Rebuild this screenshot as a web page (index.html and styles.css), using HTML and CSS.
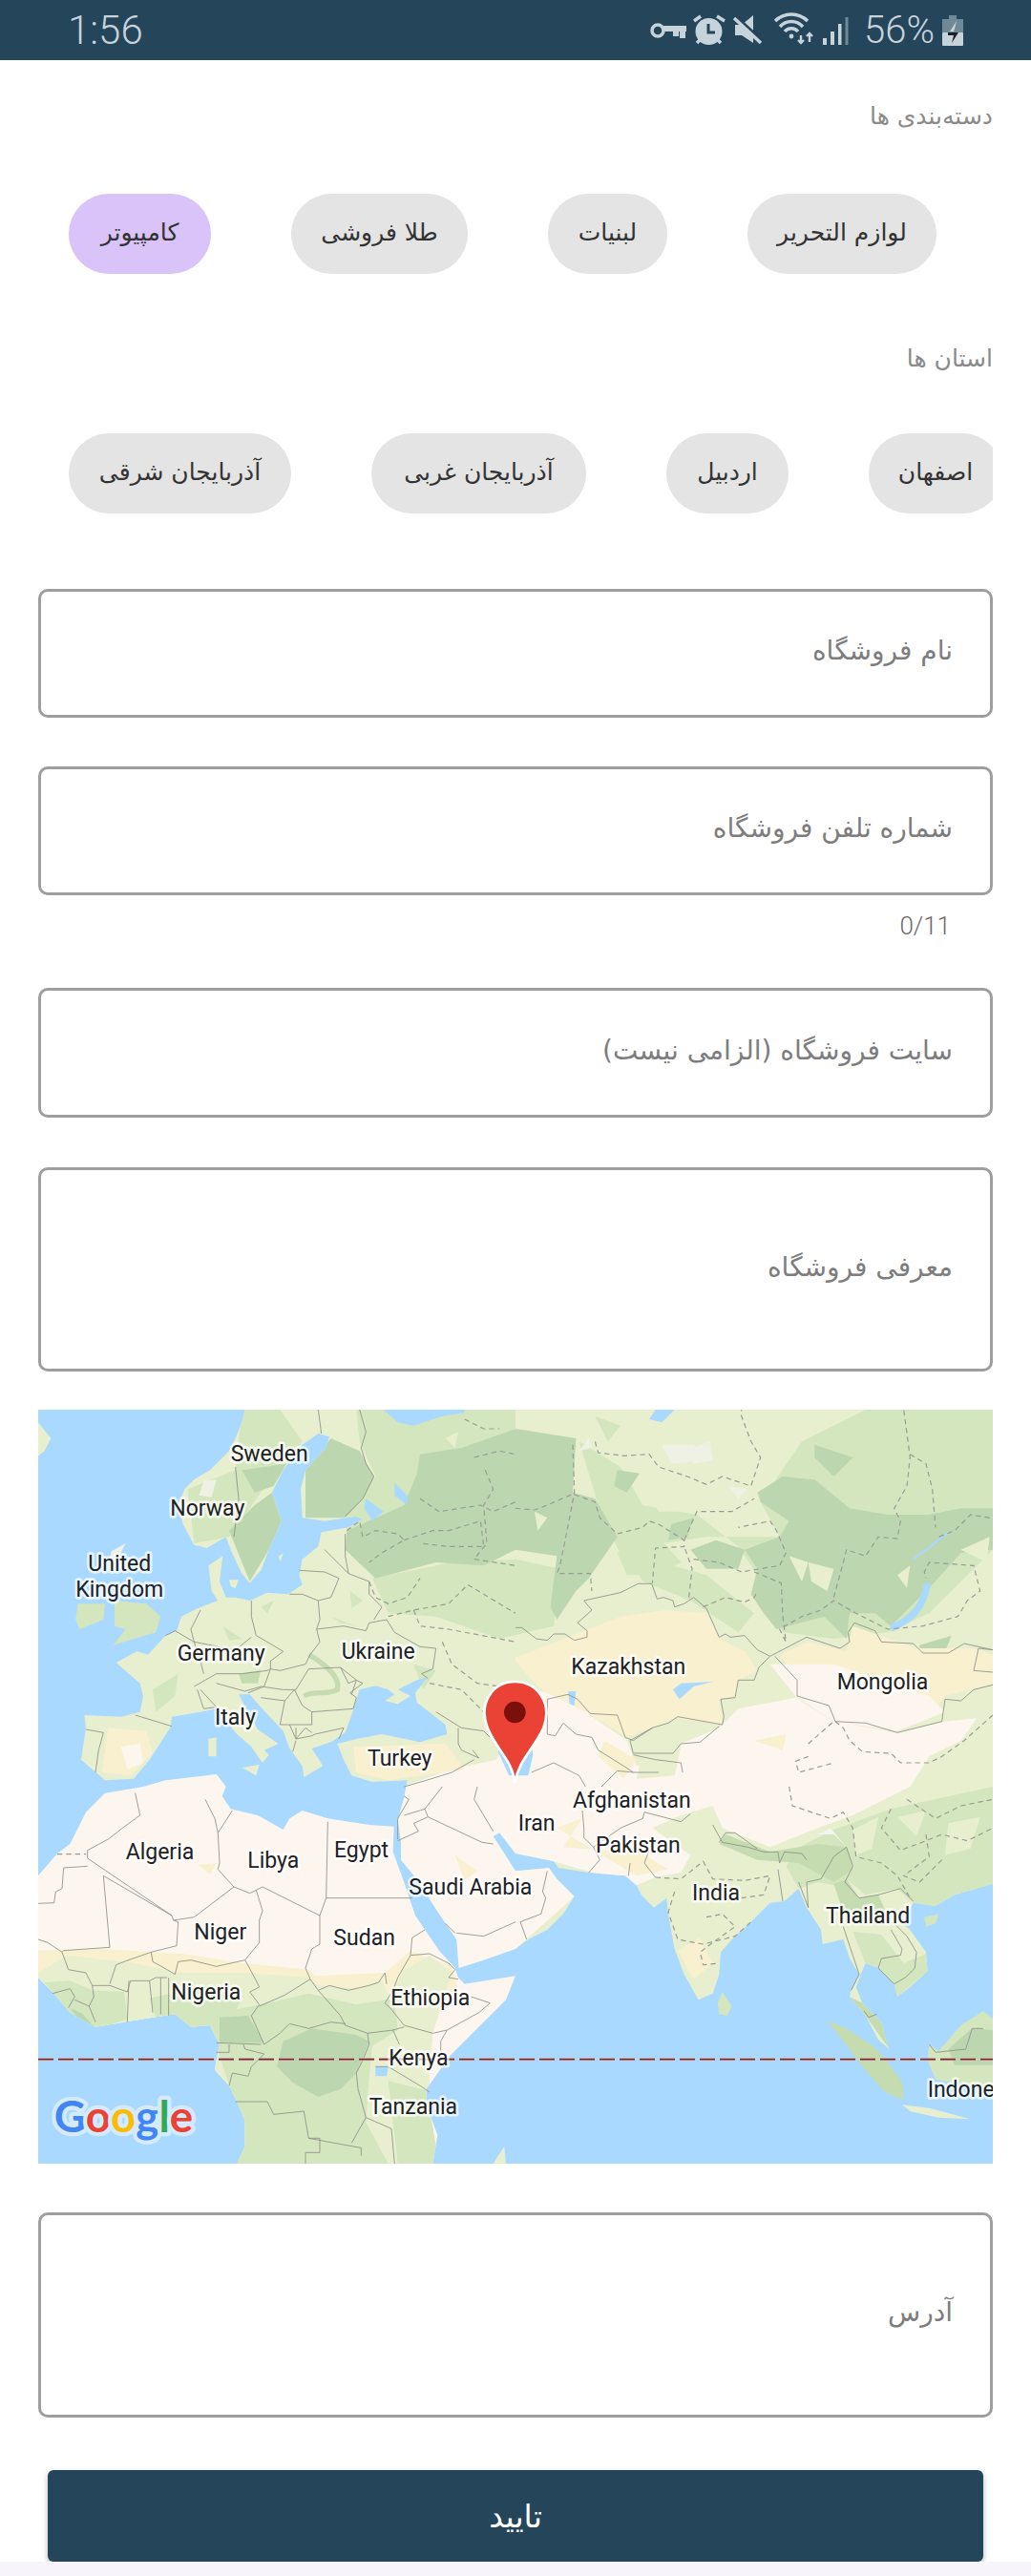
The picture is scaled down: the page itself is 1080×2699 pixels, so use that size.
FILE: index.html
```html
<!DOCTYPE html>
<html lang="fa">
<head>
    <meta charset="UTF-8">
    <meta name="viewport" content="width=device-width, initial-scale=1.0">
    <title>ثبت فروشگاه</title>
    <link rel="stylesheet" href="styles.css">
</head>
<body>
    <header class="status">
        <span class="status-time">1:56</span>
        <div class="status-right">
            <svg class="status-icons" viewBox="0 0 210 63">
                <!-- key -->
                <circle class="ic-line" cx="8" cy="32" r="6"/>
                <path class="ic-fill" d="M14 27h24v6h-1v7h-6v-7h-1v5h-6v-5H14z"/>
                <!-- alarm -->
                <circle class="ic-fill" cx="61.5" cy="33" r="14"/>
                <path class="ic-dark" d="M61 25v9h7"/>
                <path class="ic-line" d="M46 22l7-5M70 17l8 5M49 45l5-5M74 45l-5-5"/>
                <!-- mute -->
                <path class="ic-fill" d="M89 26h7l12-10v29L96 37h-7z"/>
                <path class="ic-dark ic-cut" d="M88 16l28 26"/>
                <path class="ic-line" d="M88 19l28 26"/>
                <!-- wifi -->
                <path class="ic-line" d="M131 22a24 24 0 0 1 34 0M136 28a16 16 0 0 1 24 0M141 33a9 9 0 0 1 14 0"/>
                <circle class="ic-fill" cx="148" cy="38" r="2.4"/>
                <path class="ic-thin" d="M158 37v8M155 42l3 3 3-3M167 44v-9M164 38l3-3 3 3"/>
                <!-- signal -->
                <rect class="ic-fill" x="181" y="40" width="4" height="7"/>
                <rect class="ic-fill" x="189" y="33" width="4" height="14"/>
                <rect class="ic-fill" x="197" y="25" width="3.5" height="22"/>
                <rect class="ic-dim" x="204.5" y="18" width="3" height="29"/>
            </svg>
            <span class="status-pct">56%</span>
            <svg class="status-batt" viewBox="0 0 22 32">
                <path class="ic-dim" d="M7 0h8v4h7v14H0V4h7z"/>
                <rect class="ic-fill" x="0" y="18" width="22" height="14" rx="1"/>
                <path class="ic-fill" d="M15 6L8 17h4l1-3z"/>
                <path class="ic-black" d="M6 18h11l-7 11 2-8H6z"/>
            </svg>
        </div>
    </header>

    <main class="form">
        <div class="label label-cats">دسته‌بندی ها</div>
        <div class="chips chips-cats">
            <div class="chip chip-on">کامپیوتر</div>
            <div class="chip">طلا فروشی</div>
            <div class="chip">لبنیات</div>
            <div class="chip">لوازم التحریر</div>
        </div>

        <div class="label label-states">استان ها</div>
        <div class="chips chips-states">
            <div class="chip">آذربایجان شرقی</div>
            <div class="chip">آذربایجان غربی</div>
            <div class="chip">اردبیل</div>
            <div class="chip">اصفهان</div>
        </div>

        <div class="field field-first">نام فروشگاه</div>
        <div class="field field-phone">شماره تلفن فروشگاه</div>
        <div class="counter">0/11</div>
        <div class="field field-site">سایت فروشگاه (الزامی نیست)</div>
        <div class="field field-big field-about">معرفی فروشگاه</div>

        <div class="map">
            <svg class="map-svg" viewBox="0 0 3000 2370">
                <defs>
                    <clipPath id="eurasia">
                        <polygon points="650,0 640,40 620,90 600,130 540,190 490,220 460,250 440,300 455,360 490,425 530,435 590,400 605,440 640,515 665,545 700,505 725,440 765,350 735,260 770,190 830,110 880,75 915,85 905,120 840,190 825,250 830,340 900,350 1000,335 1020,345 975,370 890,385 880,430 830,470 820,520 830,550 785,580 720,575 665,600 620,590 590,590 570,540 580,460 535,490 545,570 565,600 500,625 450,650 435,695 400,710 345,770 310,760 245,795 320,860 330,900 320,950 260,965 145,960 150,1000 135,1100 210,1165 300,1160 350,1100 415,1000 420,965 510,950 560,940 620,1015 670,1060 705,1110 725,1085 710,1070 755,1050 690,1005 660,950 630,895 665,895 700,935 770,1010 790,1065 830,1120 835,1155 895,1120 860,1065 920,1045 965,1015 985,960 1010,880 1060,868 1100,880 1120,895 1090,915 1130,925 1170,900 1130,880 1190,850 1225,840 1185,890 1190,920 1280,990 1285,1020 1200,1045 1080,1020 1000,1035 940,1050 960,1100 985,1150 1050,1170 1160,1165 1150,1220 1130,1290 1140,1355 1140,1415 1190,1475 1260,1585 1315,1665 1322,1755 1400,1730 1500,1695 1540,1665 1600,1635 1650,1585 1685,1530 1630,1475 1605,1440 1500,1450 1430,1340 1450,1330 1500,1395 1620,1420 1635,1440 1730,1455 1845,1465 1880,1495 1895,1525 1935,1565 1975,1535 1980,1585 2000,1695 2030,1775 2075,1855 2120,1835 2140,1775 2145,1705 2190,1655 2240,1610 2300,1550 2345,1545 2390,1505 2415,1565 2460,1635 2465,1680 2530,1665 2550,1725 2580,1775 2555,1825 2550,1845 2600,1905 2640,1980 2675,2010 2665,1985 2650,1925 2590,1865 2570,1815 2585,1775 2600,1740 2640,1755 2690,1805 2700,1845 2740,1815 2795,1765 2790,1705 2740,1635 2715,1615 2750,1550 2820,1560 2880,1525 3000,1490 3000,0"/>
                    </clipPath>
                    <clipPath id="africa">
                        <polygon points="330,1185 400,1165 530,1150 560,1145 590,1185 578,1215 605,1255 690,1275 770,1320 790,1285 830,1260 910,1285 1040,1305 1118,1310 1115,1390 1150,1485 1185,1590 1260,1700 1310,1755 1320,1785 1340,1805 1500,1780 1470,1855 1420,1905 1350,1975 1290,2035 1270,2065 1220,2135 1220,2185 1255,2280 1240,2370 625,2370 650,2315 650,2235 625,2175 600,2125 555,2075 560,2045 570,1995 540,1935 480,1940 430,1900 300,1920 180,1940 100,1895 50,1835 0,1785 0,1465 60,1395 100,1365 150,1265 210,1205 300,1190"/>
                    </clipPath>
                </defs>

                <rect class="sea" width="3000" height="2370"/>

                <!-- eurasia -->
                <g clip-path="url(#eurasia)">
                    <rect class="land" width="3000" height="2370"/>
                    <polygon class="green" points="1000,0 1500,0 1500,60 1330,120 1190,200 1150,300 970,380 960,330 1060,210 1010,100"/>
                    <polygon class="green" points="1700,100 1830,180 1900,300 2070,330 2200,430 2260,520 2340,700 2500,720 2670,700 2800,640 3000,440 3000,0 2600,0 2400,100 2270,290 2330,400 2100,400 1900,430 1850,500 1760,300"/>
                    <polygon class="green" points="1850,450 2100,520 2250,640 2200,700 2050,600 1900,540"/>
                    <polygon class="green" points="470,250 620,190 640,0 760,0 830,100 700,260 600,400 490,420"/>
                    <polygon class="green" points="1050,530 1300,480 1500,470 1640,500 1620,680 1450,720 1250,650 1100,640"/>
                    <polygon class="green" points="1820,450 1950,400 2020,480 1950,520 1850,520"/>
                    <polygon class="forest" points="1200,140 1330,120 1500,60 1690,90 1680,260 1750,280 1820,400 1730,530 1690,570 1630,660 1610,620 1630,460 1500,440 1400,490 1250,480 1060,530 965,440 970,380 1150,300 1190,200"/>
                    <polygon class="forest" points="600,380 680,300 735,260 765,350 725,440 665,540 620,430"/>
                    <polygon class="forest" points="640,190 780,170 740,240 680,260"/>
                    <polygon class="forest" points="840,190 920,90 1010,130 1055,210 1020,280 965,340 840,340"/>
                    <polygon class="forest" points="2260,260 2340,210 2440,220 2550,310 2670,330 2800,330 2900,310 3000,310 3000,440 2900,450 2800,560 2680,680 2630,640 2550,640 2540,720 2470,650 2320,690 2280,640 2240,580 2260,500 2220,440 2330,400 2360,350 2270,290"/>
                    <polygon class="forest" points="2440,110 2560,150 2500,210 2440,150"/>
                    <polygon class="forest" points="2770,740 2870,710 2850,760 2770,770"/>
                    <polygon class="forest" points="2050,440 2130,410 2220,440 2200,500 2100,500"/>
                    <polygon class="forest" points="1820,190 1890,200 1850,260 1810,240"/>
                    <polygon class="forest" points="1990,360 2060,340 2040,400 1980,410"/>

                    <!-- patches of lighter and darker ground -->
                    <g class="green">
                        <polygon points="1750,20 1830,50 1790,100"/>
                        <polygon points="2600,40 2700,20 2660,110"/>
                        <polygon points="2800,80 2900,50 2860,140"/>
                        <polygon points="2900,130 3000,100 2970,190"/>
                        <polygon points="360,880 440,830 430,900 370,950"/>
                        <polygon points="580,680 640,720 600,725"/>
                        <polygon points="700,620 740,600 720,640"/>
                        <polygon points="980,570 1020,600 985,625"/>
                        <polygon points="920,650 1000,680 950,670"/>
                        <polygon points="1180,800 1250,820 1210,880"/>
                    </g>
                    <g class="land">
                        <polygon points="1870,50 1960,70 1910,120"/>
                        <polygon points="2000,60 2100,20 2080,90"/>
                        <polygon points="2150,20 2240,60 2190,110"/>
                        <polygon points="1900,240 2000,260 2060,320 1950,320"/>
                        <polygon points="2120,230 2230,240 2210,300 2130,280"/>
                        <polygon points="2360,460 2420,480 2400,540"/>
                        <polygon points="2420,480 2500,500 2480,570 2430,540"/>
                        <polygon points="2700,520 2740,490 2730,560"/>
                        <polygon points="2900,440 2990,400 2980,480"/>
                        <polygon points="1280,90 1320,70 1310,120"/>
                        <polygon points="1560,320 1600,340 1570,380"/>
                    </g>
                    <g class="pale">
                        <polygon points="1960,110 2060,110 2100,160 1990,170"/>
                        <polygon points="2170,240 2230,250 2200,280"/>
                        <polygon points="1700,130 1730,90 1740,120"/>
                        <polygon points="2030,130 2110,100 2120,160 2060,170"/>
                    </g>
                    <polygon class="sand" points="1500,780 1730,690 1830,650 1970,630 2100,640 2140,720 2220,760 2260,820 2200,850 2190,900 2140,910 2150,990 2000,970 1930,1000 1850,1030 1720,950 1600,900 1550,850 1500,790"/>
                    <polygon class="sand" points="2330,770 2420,730 2540,760 2560,680 2760,750 2940,750 3000,770 3000,860 2850,900 2800,960 2700,1010 2500,980"/>
                    <polygon class="cream" points="1100,1200 1300,1130 1440,1100 1560,880 1600,890 1720,950 1850,1040 1880,1120 2000,1110 2020,1050 2140,1000 2200,940 2380,905 2500,980 2700,1015 2850,980 2950,970 2900,1040 2800,1090 2740,1185 2560,1275 2450,1315 2300,1375 2150,1315 2120,1245 2020,1275 1930,1315 2050,1400 2020,1455 1940,1470 1880,1495 1620,1420 1500,1395 1430,1340 1500,1450 1605,1440 1685,1530 1500,1695 1400,1730 1322,1755 1260,1585 1140,1415 1100,1300"/>
                    <polygon class="cream" points="2300,800 2500,800 2800,900 2850,950 2700,1010 2500,980 2380,900"/>
                    <polygon class="sand" points="990,1060 1280,1050 1340,1130 1100,1165 1000,1140"/>
                    <polygon class="sand" points="1630,1315 1710,1285 1650,1375 1900,1395 1980,1445 1880,1465"/>
                    <polygon class="sand" points="2010,1700 2080,1660 2120,1740 2060,1790"/>
                    <polygon class="sand" points="1780,1040 1880,1100 1840,1160 1760,1090"/>
                    <polygon class="sand" points="1310,1400 1380,1450 1340,1480"/>
                    <polygon class="sand" points="2250,1040 2350,1020 2340,1070"/>
                    <polygon class="sand" points="220,1000 340,1010 360,1080 290,1150 200,1140"/>
                    <polygon class="cream" points="260,1060 320,1050 330,1110 280,1130"/>
                    <polygon class="land" points="1900,1080 2020,1060 2000,1150 1880,1160"/>
                    <polygon class="green" points="2400,1370 2500,1320 2680,1255 3000,1185 3000,1490 2880,1525 2820,1560 2750,1550 2700,1505 2600,1525 2540,1475 2500,1495 2450,1485 2390,1505 2350,1435"/>
                    <polygon class="land" points="2560,1320 2640,1280 2620,1380 2570,1400"/>
                    <polygon class="land" points="2700,1280 2790,1260 2760,1340"/>
                    <polygon class="land" points="2860,1300 2960,1280 2930,1380 2850,1400"/>
                    <polygon class="mid" points="2160,1335 2300,1390 2450,1365 2540,1375 2560,1445 2500,1485 2390,1425 2260,1415 2140,1365"/>
                    <polygon class="mid" points="2500,1490 2540,1475 2580,1535 2640,1525 2680,1615 2590,1620 2530,1580"/>
                    <polygon class="white" points="2450,1335 2490,1315 2540,1375 2500,1335"/>
                    <polygon class="mid" points="2590,1865 2650,1925 2675,2010 2600,1905 2550,1845"/>
                    <polygon class="green" points="2560,1640 2650,1650 2720,1740 2790,1710 2795,1765 2700,1845 2640,1755 2600,1740"/>
                    <polygon class="mid" points="630,830 700,820 690,860 640,860"/>
                    <path class="carpath" d="M850 770C920 810 950 850 940 880 900 900 870 880 835 900"/>
                    <polygon class="pale" points="520,225 560,220 545,275 505,270"/>
                </g>

                <!-- africa -->
                <g clip-path="url(#africa)">
                    <rect class="cream" y="1100" width="1600" height="1270"/>
                    <polygon class="sand" points="0,1700 200,1695 450,1710 650,1740 850,1760 870,1780 1090,1770 1170,1700 1300,1750 1320,1830 1150,1860 0,1800"/>
                    <polygon class="sand" points="500,1430 560,1425 540,1460"/>
                    <polygon class="land" points="0,1770 90,1715 300,1740 450,1770 650,1770 850,1785 880,1810 1000,1820 1080,1790 1100,1840 1150,1760 1230,1715 1300,1770 1240,1960 1230,2100 1230,2370 0,2370"/>
                    <polygon class="green" points="540,1900 700,1870 850,1835 1000,1870 1120,1850 1130,1950 1050,2000 1040,2100 1030,2240 1100,2370 620,2370 600,2125 540,1935"/>
                    <polygon class="green" points="20,1800 100,1795 170,1825 270,1830 280,1915 180,1950 100,1900"/>
                    <polygon class="green" points="350,1850 530,1810 640,1850 600,1930 480,1950 370,1910"/>
                    <polygon class="green" points="1100,2110 1220,2140 1260,2370 1130,2370"/>
                    <polygon class="forest" points="770,1985 860,1945 1000,1965 1040,1985 1000,2085 950,2135 880,2160 800,2115 750,2065"/>
                    <polygon class="forest" points="570,1910 660,1905 710,1990 570,1990"/>
                    <polygon class="forest" points="100,1880 140,1900 180,1945 130,1920"/>
                </g>

                <!-- islands -->
                <polygon class="land" points="0,40 40,90 20,130 0,145"/>
                <polygon class="pale" points="230,445 275,420 255,460 225,470"/>
                <polygon class="green" points="240,600 340,610 385,650 370,700 235,740 275,690 240,680"/>
                <polygon class="green" points="125,610 210,610 205,660 130,690 118,660"/>
                <polygon class="land" points="535,1035 560,1030 560,1090 535,1090"/>
                <polygon class="land" points="640,1125 695,1115 685,1150"/>
                <polygon class="land" points="755,462 770,450 762,478"/>
                <polygon class="land" points="600,535 630,535 620,562 605,555"/>
                <polygon class="land" points="1430,2370 1465,2315 1470,2370"/>
                <polygon class="green" points="2150,1830 2180,1875 2165,1905 2140,1900 2135,1865"/>
                <polygon class="green" points="2785,1595 2830,1585 2820,1615 2790,1625"/>
                <polygon class="mid" points="2480,1920 2540,1945 2630,2005 2680,2065 2715,2115 2720,2170 2660,2145 2590,2065 2530,1985"/>
                <polygon class="land" points="2715,2185 2800,2195 2930,2230 2830,2225 2740,2205"/>
                <polygon class="green" points="2800,1995 2830,2015 2900,1935 2970,1890 3000,1915 3000,2135 2820,2105 2795,2045"/>
                <polygon class="forest" points="2860,2010 2935,1945 3000,1950 3000,2060 2880,2060"/>

                <!-- seas and lakes -->
                <polygon class="sea" points="1085,0 1130,40 1180,50 1270,20 1340,10 1340,0"/>
                <polygon class="sea" points="1030,280 1085,320 1050,350 1025,310"/>
                <polygon class="sea" points="1120,230 1160,270 1160,300 1120,270"/>
                <polygon class="sea" points="1450,900 1530,900 1545,1000 1555,1085 1540,1150 1480,1150 1445,1075"/>
                <polygon class="sea" points="1995,880 2020,860 2120,855 2060,870 2015,910"/>
                <polygon class="sea" points="1665,885 1690,885 1685,930 1670,925"/>
                <polygon class="sea" points="1060,2065 1100,2065 1095,2095 1060,2095"/>
                <polygon class="sea" points="1940,0 2000,0 1960,40 1920,30"/>
                <path class="lake" d="M2680 688C2740 660 2780 630 2795 545"/>
                <path class="lake-thin" d="M2780 450L2860 385M2750 470L2790 440"/>

                <!-- country borders, europe -->
                <g class="border">
                    <polyline points="620,180 630,280 615,400"/>
                    <polyline points="880,0 890,75"/>
                    <polyline points="1010,0 1030,70 1015,120 1030,170 1055,210 1020,280 965,335"/>
                    <polyline points="965,390 965,460 975,515 900,440"/>
                    <polyline points="820,505 900,510 945,530 920,590 880,600 830,580 790,580"/>
                    <polyline points="975,515 1040,540 1040,580 1080,620 1055,660"/>
                    <polyline points="670,600 670,650 685,710 720,730 770,760 730,790 730,815 760,820 840,800 855,770"/>
                    <polyline points="880,600 885,660 875,690 885,730 855,770"/>
                    <polyline points="875,690 960,680 1030,695 1040,670 1095,660 1120,700 1200,745 1250,750 1240,815 1205,830 1225,845"/>
                    <polyline points="510,630 480,690 490,730 430,695 400,710"/>
                    <polyline points="670,715 620,755 490,730 510,790 520,830"/>
                    <polyline points="305,960 420,995"/>
                    <polyline points="150,1005 205,1015 190,1070 180,1140"/>
                    <polyline points="490,870 560,830 640,830 720,820 730,815 710,870 660,890"/>
                    <polyline points="500,880 520,940 560,935 510,880"/>
                    <polyline points="560,860 650,885 700,870"/>
                    <polyline points="700,870 770,880 810,880 850,815 950,810 1000,850 1020,860 980,890 1000,905 990,940 860,950 860,990 790,990 810,1035 860,1025 870,1020 960,1000 945,1035"/>
                    <polyline points="700,905 775,915 805,880 830,930 860,950"/>
                    <polyline points="775,915 760,990 790,990"/>
                    <polyline points="810,1000 810,1035 840,1000 860,1015"/>
                    <polyline points="810,1040 800,1075"/>
                    <polyline points="950,810 975,860 1000,850 985,895"/>
                    <polyline points="1250,950 1330,1000 1400,1010 1420,1030"/>
                    <polyline points="1320,1000 1320,1050 1330,1070 1385,1095 1365,1070"/>
                    <polyline points="1150,1185 1220,1165 1300,1140 1370,1100"/>
                </g>
                <!-- asia -->
                <g class="border" transform="translate(1500 0)">
                    <polyline points="0,685 20,685 65,720 100,725 120,705 155,705 185,725 225,715 225,695 195,670 240,630 215,600 330,575 385,547 428,547 445,595 465,590 495,600 500,620 530,610 560,590 600,625 640,715 660,705 675,715 720,710 760,755 800,775"/>
                    <polyline points="800,775 765,810 750,850 700,850 690,905 645,910 655,965 650,990 510,965 480,985 430,1000 370,1040 345,1030 320,960 235,955 195,910 165,895 100,910 100,1020 125,1025 150,985 190,1020 240,1030 260,1070 340,1120 370,1140 450,1140"/>
                    <polyline points="800,775 915,715 1020,750 1050,730 1045,700 1065,670 1130,695 1150,730 1250,735 1280,765 1360,765 1410,735 1500,755"/>
                    <polyline points="815,775 885,850 885,900 985,930 1005,980 1100,985 1200,1015 1340,980 1350,910 1400,915 1440,880 1500,865"/>
                    <polyline points="1500,755 1455,750 1440,820 1500,825"/>
                    <polyline points="640,995 580,1045 520,1050 495,1080 370,1080 360,1040 430,1000"/>
                    <polyline points="370,1085 440,1100 520,1110 525,1140"/>
                    <polyline points="50,1140 120,1110 200,1150 220,1185"/>
                    <polyline points="270,1185 320,1135 370,1140"/>
                </g>
                <!-- africa, arabia -->
                <g class="border" transform="translate(0 1185)">
                    <polyline points="155,225 420,405 425,420 490,410 615,315 665,335 705,315 885,405 905,350 910,110"/>
                    <polyline points="525,40 555,100 565,145 570,240 565,260 615,315"/>
                    <polyline points="610,75 565,145"/>
                    <polyline points="305,20 320,90 265,130 220,165 155,200 155,225"/>
                    <polyline points="155,250 80,255 75,320 55,330 50,365 0,367"/>
                    <polyline points="205,280 225,505 80,515 75,520 30,490 0,480"/>
                    <polyline points="205,280 420,405"/>
                    <polyline points="425,420 440,425 435,500 355,520 360,550 405,575 430,590 440,550 480,545 560,565 650,545 695,490 695,420 705,390 685,325"/>
                    <polyline points="355,520 270,550 245,560 225,620"/>
                    <polyline points="650,545 680,600 695,630 665,645 695,685 670,720 710,810"/>
                    <polyline points="885,405 885,495 860,510 840,570 855,605 775,655 695,690"/>
                    <polyline points="855,605 880,640 915,625 975,640 1040,625 1070,615 1090,585 1095,620"/>
                    <polyline points="905,350 1175,350"/>
                    <polyline points="1215,450 1175,475 1170,530 1130,600 1115,640 1090,680 1110,700 1150,750 1240,775 1285,765 1265,800 1265,830"/>
                    <polyline points="1420,680 1385,710 1285,765"/>
                    <polyline points="1360,660 1420,680"/>
                    <polyline points="1170,530 1230,525 1290,555 1310,575 1290,600 1320,605"/>
                    <polyline points="880,640 950,720 965,750 1035,775 1040,810 1020,860 1000,900 1005,950 1030,1040 1110,1075 1120,1185"/>
                    <polyline points="1060,880 1100,880 1200,940 1230,960"/>
                    <polyline points="1035,775 1115,765 1150,755"/>
                    <polyline points="1115,765 1135,810"/>
                    <polyline points="710,810 760,775 790,745 850,760 920,740 965,745"/>
                    <polyline points="560,805 700,810"/>
                    <polyline points="600,810 600,835 560,835"/>
                    <polyline points="645,810 650,825 710,840 670,880 660,910 610,900 600,940"/>
                    <polyline points="620,990 720,990 740,1030 835,1020 850,1105 985,1130 1015,1135 1015,1160"/>
                    <polyline points="1030,1040 985,1120"/>
                    <polyline points="850,1105 885,1105 885,1150 840,1150 840,1185"/>
                    <polyline points="75,520 95,575 150,585 170,625 225,625 280,645 290,610 350,610 370,600 405,600"/>
                    <polyline points="285,610 280,740"/>
                    <polyline points="350,610 360,710"/>
                    <polyline points="385,600 385,715"/>
                    <polyline points="410,720 410,600"/>
                    <polyline points="45,650 100,635 115,660 95,695"/>
                    <polyline points="160,690 180,740"/>
                    <polyline points="170,625 175,660 160,690 115,670"/>
                    <polyline points="1215,70 1225,95 1180,115 1195,140 1130,170"/>
                    <polyline points="1225,95 1395,175 1430,180"/>
                    <polyline points="1315,460 1400,470 1500,425"/>
                    <polyline points="1310,460 1280,430"/>
                    <polyline points="1150,30 1165,40 1130,100 1130,165"/>
                    <polyline points="1150,90 1215,70 1270,0"/>
                    <polyline points="1380,0 1370,40 1430,140"/>
                </g>
                <g class="border" transform="translate(1500 1185)">
                    <polyline points="100,265 85,330 95,350 80,400 15,425 35,480"/>
                    <polyline points="210,75 215,130 215,160 245,190 265,230 230,270"/>
                    <polyline points="245,190 330,130 400,100 405,80 520,110 550,85"/>
                    <polyline points="620,120 650,175 730,190 780,205 825,205 830,240 845,205 900,210 915,230"/>
                    <polyline points="640,175 660,145 690,145 760,195"/>
                    <polyline points="825,260 840,360"/>
                    <polyline points="890,300 920,380 915,300 960,290 1000,220 1040,190 1060,250 1035,300 1080,350 1140,340 1210,320 1250,360"/>
                    <polyline points="1030,440 1050,500 1080,590 1055,640"/>
                    <polyline points="1180,450 1215,510 1210,530 1150,540 1140,570 1190,620 1225,600 1255,570 1260,520 1230,470 1190,430"/>
                    <polyline points="1095,705 1110,725 1135,715"/>
                    <polyline points="1300,810 1320,835 1415,825 1435,760 1470,760"/>
                    <polyline points="440,285 405,240 420,200"/>
                    <polyline points="360,240 355,280"/>
                </g>

                <!-- state lines -->
                <g class="state">
                    <polyline points="1200,280 1260,320 1390,300 1430,320 1500,290"/>
                    <polyline points="1340,30 1400,60 1450,60"/>
                    <polyline points="1370,150 1450,130 1500,140"/>
                    <polyline points="1405,190 1430,250 1400,300 1410,420 1370,470 1500,490"/>
                    <polyline points="970,380 1010,350 1020,400 1060,380 1130,390 1150,410 1080,450 1040,480"/>
                    <polyline points="1150,410 1240,380 1290,380 1390,350 1400,430 1290,430 1200,420"/>
                    <polyline points="1040,540 1060,590 1100,610 1160,590 1200,530"/>
                    <polyline points="1180,630 1200,680 1290,690 1500,730"/>
                    <polyline points="1270,730 1300,800 1380,860 1450,870"/>
                    <polyline points="1230,860 1330,880 1400,950"/>
                    <polyline points="1100,650 1180,630 1290,610 1350,550 1500,640"/>
                    <polyline points="60,212 150,212" transform="translate(0 1185)"/>
                </g>
                <g class="state" transform="translate(1500 0)">
                    <polyline points="0,310 60,315 100,300 180,265 250,290 265,340 320,390 400,370 420,350 450,360 530,410 530,430 440,435 430,545"/>
                    <polyline points="180,110 185,260 170,340 140,490 130,515 235,515 240,570"/>
                    <polyline points="250,100 260,135 340,145 420,140 450,180 540,210 600,235 650,210 740,240 770,150 740,100 710,20 710,0"/>
                    <polyline points="530,410 570,320 680,320 750,280"/>
                    <polyline points="560,470 640,480 710,510 830,490 850,450 820,380 800,350 700,370"/>
                    <polyline points="750,510 835,545 840,650 850,730 830,690 900,650 960,630 1000,600 1070,640 1170,690 1280,680 1390,650 1420,600 1460,570 1440,490 1300,480 1285,510 1290,530"/>
                    <polyline points="1000,590 1030,480 1040,440 1100,460 1140,400 1200,405 1210,350 1190,310 1230,240 1240,150 1220,0"/>
                    <polyline points="1240,140 1290,170 1310,250 1320,370"/>
                    <polyline points="1490,340 1430,330 1380,380 1330,400"/>
                    <polyline points="545,590 555,500 530,430"/>
                    <polyline points="590,620 660,590 720,605 750,590 760,570"/>
                    <polyline points="1005,980 1030,1000 1050,1040 1090,1075 1180,1080 1210,1110 1300,1110 1340,1090 1410,1040 1500,960"/>
                    <polyline points="920,1050 1000,980"/>
                    <polyline points="920,1090 880,1105 890,1140 1000,1110"/>
                </g>
                <g class="state" transform="translate(1500 1185)">
                    <polyline points="440,285 520,290 590,235 620,290 720,295 800,280 780,340 710,350"/>
                    <polyline points="500,330 480,395 510,480 590,495 690,470 740,425"/>
                    <polyline points="600,410 650,400 690,440 620,490 580,520 590,560 640,555"/>
                    <polyline points="860,0 870,60 990,100 1030,80 1060,130 1070,220 1150,240 1200,280 1240,350"/>
                    <polyline points="1180,70 1150,130 1210,200 1290,170 1340,150 1420,170 1500,130"/>
                    <polyline points="1230,40 1320,100 1400,60 1500,40"/>
                    <polyline points="1290,150 1300,220 1220,280 1270,300 1340,230"/>
                </g>

                <!-- equator -->
                <line class="equator-glow" x1="0" y1="2042" x2="3000" y2="2042"/>
                <line class="equator" x1="0" y1="2042" x2="3000" y2="2042"/>

                <!-- labels -->
                <text class="place" x="605" y="163">Sweden</text>
                <text class="place" x="415" y="333">Norway</text>
                <text class="place" x="157" y="507">United</text>
                <text class="place" x="118" y="587">Kingdom</text>
                <text class="place" x="437" y="790">Germany</text>
                <text class="place" x="953" y="782">Ukraine</text>
                <text class="place" x="555" y="990">Italy</text>
                <text class="place" x="1035" y="1120">Turkey</text>
                <text class="place" x="1675" y="832">Kazakhstan</text>
                <text class="place" x="2510" y="878">Mongolia</text>
                <text class="place" x="275" y="1413">Algeria</text>
                <text class="place" x="658" y="1440">Libya</text>
                <text class="place" x="930" y="1407">Egypt</text>
                <text class="place" x="1165" y="1523">Saudi Arabia</text>
                <text class="place" x="490" y="1665">Niger</text>
                <text class="place" x="928" y="1683">Sudan</text>
                <text class="place" x="418" y="1853">Nigeria</text>
                <text class="place" x="1108" y="1873">Ethiopia</text>
                <text class="place" x="1102" y="2060">Kenya</text>
                <text class="place" x="1040" y="2213">Tanzania</text>
                <text class="place" x="1680" y="1250">Afghanistan</text>
                <text class="place" x="1508" y="1323">Iran</text>
                <text class="place" x="1752" y="1393">Pakistan</text>
                <text class="place" x="2055" y="1542">India</text>
                <text class="place" x="2475" y="1613">Thailand</text>
                <text class="place" x="2795" y="2160">Indone</text>

                <!-- google logo -->
                <text class="logo" x="50" y="2272"><tspan class="g-blue">G</tspan><tspan class="g-red">o</tspan><tspan class="g-yellow">o</tspan><tspan class="g-blue">g</tspan><tspan class="g-green">l</tspan><tspan class="g-red">e</tspan></text>

                <!-- marker -->
                <path class="pin" d="M1498 1173C1490 1100 1440 1070 1412 1000 1382 920 1430 855 1498 855 1566 855 1618 920 1588 1000 1556 1070 1510 1100 1498 1173Z"/>
                <circle class="pin-dot" cx="1498" cy="951" r="34"/>
            </svg>
        </div>

        <div class="field field-big field-address">آدرس</div>
        <button class="submit">تایید</button>
    </main>
    <div class="bottom-strip"></div>
</body>
</html>
```

FILE: styles.css
```css
body {
  margin: 0;
  background: #fff;
  font-family: "DejaVu Sans", "Noto Sans", sans-serif;
}

/* status bar */
.status {
  height: 63px;
  background-color: #24455a;
  color: #c6d3da;
  display: flex;
  align-items: center;
  justify-content: space-between;
  padding: 0 71px 0 71px;
  font-family: Roboto, sans-serif;
  font-weight: 300;
  font-size: 40px;
}
.status-time {
  font-size: 42px;
}
.status-right {
  display: flex;
  align-items: center;
}
.status-icons {
  width: 210px;
  height: 63px;
  display: block;
}
.status-pct {
  margin-left: 14px;
  margin-right: 8px;
}
.status-batt {
  width: 22px;
  height: 32px;
  display: block;
}
.ic-fill { fill: #c6d3da; }
.ic-dim { fill: #6f8997; }
.ic-black { fill: #1c2226; }
.ic-line { fill: none; stroke: #c6d3da; stroke-width: 3.5; }
.ic-thin { fill: none; stroke: #c6d3da; stroke-width: 2.4; }
.ic-dark { fill: none; stroke: #24455a; stroke-width: 3; }
.ic-cut { stroke-width: 4; }

/* form */
.form {
  padding: 0 40px;
}
.label {
  direction: rtl;
  height: 36px;
  line-height: 36px;
  font-size: 25px;
  color: #8a8a8a;
}
.label-cats { margin-top: 41px; }
.label-states { margin-top: 71px; }

.chips {
  display: grid;
  column-gap: 84px;
  height: 84px;
  padding-left: 32px;
  overflow: hidden;
}
.chips-cats {
  grid-template-columns: 149px 185px 125px 198px;
  margin-top: 63px;
}
.chips-states {
  grid-template-columns: 233px 225px 128px 140px;
  margin-top: 60px;
}
.chip {
  height: 84px;
  line-height: 82px;
  text-align: center;
  border-radius: 42px;
  background-color: #e4e4e4;
  color: #333;
  font-size: 25px;
  white-space: nowrap;
}
.chip-on {
  background-color: #dac3f9;
}

.field {
  box-sizing: border-box;
  height: 135px;
  border: 3px solid #9e9e9e;
  border-radius: 10px;
  padding: 0 39px 6px;
  display: flex;
  align-items: center;
  direction: rtl;
  font-size: 28px;
  color: #7d7d7d;
}
.field-first { margin-top: 79px; }
.field-phone { margin-top: 51px; }
.field-site { margin-top: 50px; height: 136px; }
.field-big { height: 214px; }
.field-about { margin-top: 52px; }
.field-address { margin-top: 51px; height: 215px; }

.counter {
  height: 30px;
  line-height: 30px;
  margin-top: 17px;
  padding-right: 44px;
  text-align: right;
  font-family: Roboto, sans-serif;
  font-weight: 300;
  font-size: 26px;
  color: #6a6a6a;
}

/* map */
.map {
  margin-top: 40px;
  height: 790px;
}
.map-svg {
  display: block;
  width: 1000px;
  height: 790px;
}
.sea { fill: #a9d9fe; }
.land { fill: #e8efcf; }
.green { fill: #d3e6bd; }
.mid { fill: #c4dcaf; }
.forest { fill: #bcd6b0; }
.sand { fill: #f8f0cf; }
.cream { fill: #fdf6ef; }
.pale { fill: #eef1e3; }
.white { fill: #f4f4f0; }
.carpath { fill: none; stroke: #c4dcaf; stroke-width: 16; }
.lake { fill: none; stroke: #a9d9fe; stroke-width: 22; }
.lake-thin { fill: none; stroke: #a9d9fe; stroke-width: 6; }
.border polyline {
  fill: none;
  stroke: #8d9289;
  stroke-width: 2.6;
}
.state polyline {
  fill: none;
  stroke: #989d93;
  stroke-width: 3.6;
  stroke-dasharray: 16 12;
}
.equator-glow {
  stroke: #f3c9c4;
  stroke-width: 9;
  stroke-dasharray: 48 15;
}
.equator {
  stroke: #6e2a2c;
  stroke-width: 5;
  stroke-dasharray: 48 15;
}
.place {
  font-family: Roboto, sans-serif;
  font-size: 69px;
  fill: #202124;
  stroke: rgba(255, 255, 255, 0.72);
  stroke-width: 16px;
  paint-order: stroke;
  stroke-linejoin: round;
}
.logo {
  font-family: Lato, sans-serif;
  font-weight: 700;
  font-size: 137px;
  stroke: #d4ebff;
  stroke-width: 26px;
  paint-order: stroke;
  stroke-linejoin: round;
}
.g-blue { fill: #4285f4; }
.g-red { fill: #ea4335; }
.g-yellow { fill: #fbbc05; }
.g-green { fill: #34a853; }
.pin {
  fill: #ea4335;
  stroke: #fff;
  stroke-width: 8;
}
.pin-dot { fill: #7b0f0c; }

/* button */
.submit {
  display: block;
  width: 980px;
  height: 96px;
  margin: 55px 10px 0;
  border: 0;
  border-radius: 6px;
  background-color: #24455a;
  color: #fff;
  font-family: inherit;
  font-size: 33px;
  box-shadow: 0 3px 6px rgba(0, 0, 0, 0.28);
}
.bottom-strip {
  height: 15px;
  background-color: #f7f5fb;
}
```
